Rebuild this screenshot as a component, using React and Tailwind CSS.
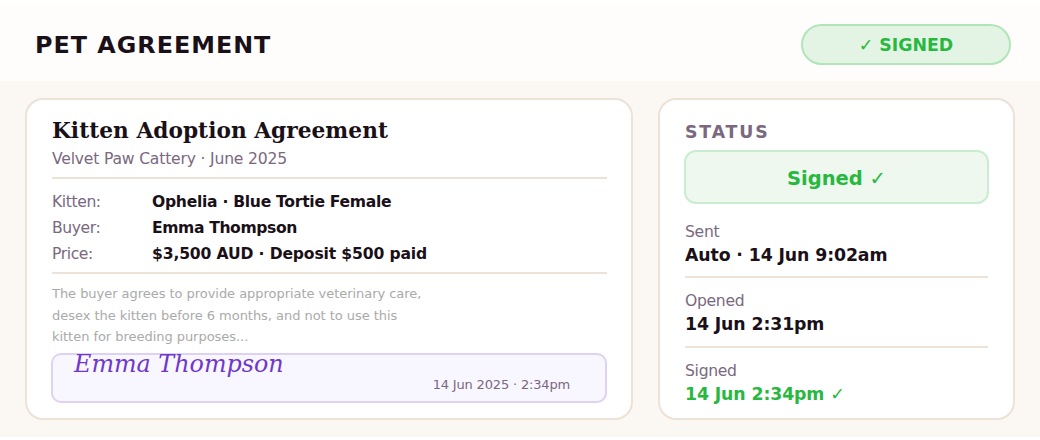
const DETAILS = [
  { label: 'Kitten:', value: 'Ophelia · Blue Tortie Female', tracking: 'tracking-[-0.29px]' },
  { label: 'Buyer:', value: 'Emma Thompson', tracking: 'tracking-[-0.39px]' },
  { label: 'Price:', value: '$3,500 AUD · Deposit $500 paid', tracking: 'tracking-[-0.15px]' },
];

const EVENTS = [
  { label: 'Sent', value: 'Auto · 14 Jun 9:02am' },
  { label: 'Opened', value: '14 Jun 2:31pm' },
  { label: 'Signed', value: '14 Jun 2:34pm ✓', done: true },
];

function Header() {
  return (
    <header className="flex h-[78px] items-center justify-between bg-[#fffdfc] pr-[29px] pl-[35px]">
      <h1 className="pt-[6px] text-[23.83px] leading-[28px] font-bold tracking-[1px]">PET AGREEMENT</h1>
      <div className="mt-[5px] flex h-[41px] w-[210px] items-center justify-center rounded-full border-2 border-[#b0e5b8] bg-[#e4f4e4] pt-[2px] text-[17.33px] font-bold text-[#28b840]">
        ✓ SIGNED
      </div>
    </header>
  );
}

function Agreement() {
  return (
    <section className="h-[322px] w-[608px] rounded-[18px] border-2 border-[#ede2d8] bg-white px-[25px] pt-[18px]">
      <h2 className="font-['DejaVu_Serif',serif] text-[21.67px] leading-[26px] font-bold tracking-[0.04px]">Kitten Adoption Agreement</h2>
      <p className="mt-[2px] text-[15.6px] leading-[26px] tracking-[-0.19px] text-[#7a6880]">Velvet Paw Cattery · June 2025</p>

      <dl className="mt-[5px] -mr-px border-y-2 border-[#ede2d8] pt-[10px] pb-[5px] text-[15.6px] leading-[26px]">
        {DETAILS.map((row) => (
          <div key={row.label} className="flex">
            <dt className="w-[100px] tracking-[-0.4px] text-[#7a6880]">{row.label}</dt>
            <dd className={`font-bold ${row.tracking}`}>{row.value}</dd>
          </div>
        ))}
      </dl>

      <p className="mt-[9px] text-[13px] leading-[21.67px] tracking-[-0.04px] text-[#aaaaaa]">
        The buyer agrees to provide appropriate veterinary care,
        <br />
        desex the kitten before 6 months, and not to use this
        <br />
        kitten for breeding purposes...
      </p>

      <div className="-mx-px mt-[5px] flex h-[50px] justify-between rounded-[10px] border-2 border-[#ddd2f4] bg-[#f8f6ff] pr-[35px] pl-[21px]">
        <p className="-mt-[5px] font-['DejaVu_Serif',serif] text-[23.83px] leading-[28px] text-[#7038c8] italic">Emma Thompson</p>
        <p className="mt-[18px] text-[13px] leading-[24px] tracking-[-0.17px] text-[#7a6880]">14 Jun 2025 · 2:34pm</p>
      </div>
    </section>
  );
}

function Status() {
  return (
    <section className="h-[322px] w-[357px] rounded-[18px] border-2 border-[#ede2d8] bg-white px-[25px] pt-[19px]">
      <h2 className="text-[17.33px] leading-[26px] font-bold tracking-[1.85px] text-[#7a6880]">STATUS</h2>
      <div className="-mx-px mt-[5px] flex h-[54px] items-center justify-center rounded-[12px] border-2 border-[#c8edd0] bg-[#eef8ef] pt-[3px] text-[19.5px] font-bold text-[#28b840]">
        Signed ✓
      </div>

      <ul className="mt-[5px] divide-y-2 divide-[#ede2d8]">
        {EVENTS.map((event) => (
          <li key={event.label} className="h-[69.33px] pt-[11px]">
            <p className="text-[15.6px] leading-[24px] tracking-[-0.3px] text-[#7a6880]">{event.label}</p>
            <p className={`text-[17.33px] leading-[23px] font-bold tracking-[-0.12px] ${event.done ? 'text-[#28b840]' : ''}`}>
              {event.value}
            </p>
          </li>
        ))}
      </ul>
    </section>
  );
}

export default function App() {
  return (
    <div className="h-[440px] w-[1040px] overflow-hidden bg-white pt-[3px] font-['DejaVu_Sans',sans-serif] text-[#1a1018]">
      <Header />
      <main className="flex h-[356px] gap-[25px] bg-[#fbf7f2] pt-[17px] pl-[25px]">
        <Agreement />
        <Status />
      </main>
    </div>
  );
}
